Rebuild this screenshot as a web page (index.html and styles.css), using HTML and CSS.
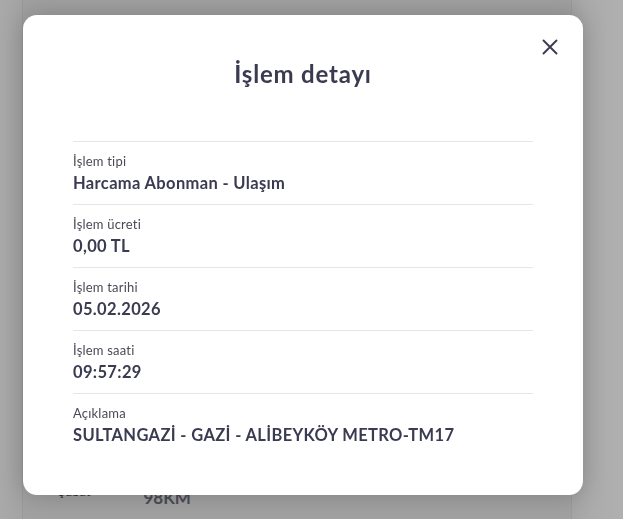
FILE: index.html
```html
<!DOCTYPE html>
<html lang="tr">
<head>
<meta charset="utf-8">
<title>İşlem detayı</title>
<link rel="stylesheet" href="styles.css">
</head>
<body>
<div class="page">
  <div class="card">
    <div class="card-row">
      <span class="month">Şubat</span>
      <span class="km">98KM</span>
    </div>
  </div>
</div>
<div class="modal" role="dialog">
  <button class="close" aria-label="Kapat">
    <svg width="16" height="16" viewBox="0 0 16 16"><path d="M1.5 1.5 L14.5 14.5 M14.5 1.5 L1.5 14.5" stroke="#3a3b50" stroke-width="1.9" stroke-linecap="round" fill="none"/></svg>
  </button>
  <h1 class="title">İşlem detayı</h1>
  <div class="list">
    <div class="row"><div class="label">İşlem tipi</div><div class="value">Harcama Abonman - Ulaşım</div></div>
    <div class="row"><div class="label">İşlem ücreti</div><div class="value">0,00 TL</div></div>
    <div class="row"><div class="label">İşlem tarihi</div><div class="value">05.02.2026</div></div>
    <div class="row"><div class="label">İşlem saati</div><div class="value">09:57:29</div></div>
    <div class="row"><div class="label">Açıklama</div><div class="value">SULTANGAZİ - GAZİ - ALİBEYKÖY METRO-TM17</div></div>
  </div>
</div>
</body>
</html>
```

FILE: styles.css
```css
html, body {
  margin: 0;
  padding: 0;
  height: 100%;
}
body {
  background: linear-gradient(90deg, #a9a9a9 0, #a4a4a4 22px, #a4a4a4 570px, #ababab 590px, #b0b0b0 623px);
  font-family: "Lato", "Noto Sans", sans-serif;
  overflow: hidden;
}
.page {
  padding: 0 51px 0 22px;
  height: 100%;
  box-sizing: border-box;
}
.card {
  height: 100%;
  background: #a1a1a1;
  border-left: 1px solid #9a9a9a;
  border-right: 1px solid #9b9b9b;
  display: flex;
  flex-direction: column;
  justify-content: flex-end;
}
.card-row {
  display: flex;
  align-items: flex-start;
  padding: 0 0 11px 35px;
  gap: 53px;
}
.month {
  font-size: 13px;
  color: #2f2f35;
  margin-top: -4px;
}
.km {
  font-size: 17px;
  font-weight: 700;
  color: #4c4c55;
}
.modal {
  position: fixed;
  left: 23px;
  top: 15px;
  width: 560px;
  height: 480px;
  box-sizing: border-box;
  background: #fff;
  border-radius: 14px;
  box-shadow: 0 0 24px rgba(0, 0, 0, 0.22);
  padding: 46px 50px 0;
}
.close {
  position: absolute;
  top: 24px;
  right: 25px;
  width: 16px;
  height: 16px;
  padding: 0;
  border: 0;
  background: none;
  display: flex;
}
.title {
  margin: 0 0 54px;
  font-size: 24px;
  line-height: 26px;
  letter-spacing: 0.8px;
  font-weight: 700;
  color: #3a3b50;
  text-align: center;
}
.row {
  border-top: 1px solid #e6e6e8;
  padding: 11px 0 10px;
  display: flex;
  flex-direction: column;
  gap: 3px;
}
.label {
  font-size: 13px;
  line-height: 16px;
  letter-spacing: 0.2px;
  color: #4a4a55;
}
.value {
  font-size: 16.5px;
  line-height: 22px;
  letter-spacing: 0.35px;
  font-weight: 700;
  color: #3a3b50;
}
```
